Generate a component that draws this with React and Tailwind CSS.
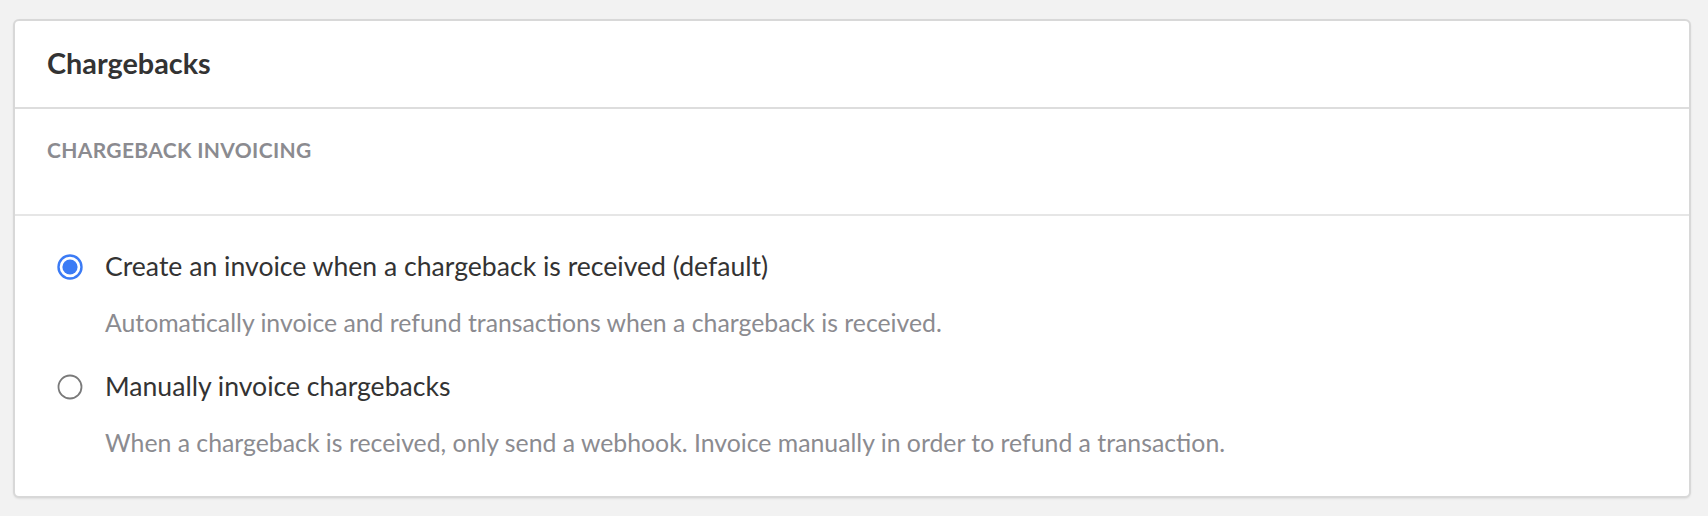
import { useState } from "react";

// Chargebacks settings card - a single radio group inside a bordered panel.
const options = [
  {
    id: "auto",
    label: "Create an invoice when a chargeback is received (default)",
    help: "Automatically invoice and refund transactions when a chargeback is received.",
  },
  {
    id: "manual",
    label: "Manually invoice chargebacks",
    help: "When a chargeback is received, only send a webhook. Invoice manually in order to refund a transaction.",
  },
];

function Radio({ checked }) {
  return (
    <svg width="26" height="26" viewBox="0 0 26 26" className="shrink-0">
      {checked ? (
        <>
          <circle cx="13" cy="13" r="11.5" fill="white" stroke="#3b7bf5" strokeWidth="2.4" />
          <circle cx="13" cy="13" r="7.6" fill="#3b7bf5" />
        </>
      ) : (
        <circle cx="13" cy="13" r="11.5" fill="white" stroke="#7a7a7a" strokeWidth="1.8" />
      )}
    </svg>
  );
}

export default function App() {
  const [value, setValue] = useState("auto");

  return (
    <div
      className="min-h-[516px] bg-[#f2f2f2] pt-[19px] pb-[20px] pl-[13px] pr-[17px]"
      style={{ fontFamily: "Lato, 'Noto Sans', sans-serif" }}
    >
      <div className="overflow-hidden rounded-[6px] border-2 border-[#d8d8d8] bg-white shadow-[0_1px_2px_rgba(0,0,0,0.08)]">
        {/* Card title */}
        <div className="flex h-[88px] items-center border-b-2 border-[#dddddd] px-[32px]">
          <h2 className="text-[28.8px] font-bold text-[#333333]">Chargebacks</h2>
        </div>

        {/* Section heading */}
        <div className="h-[107px] border-b-2 border-[#e6e6e6] px-[32px] pt-[25px]">
          <p className="text-[21px] font-bold uppercase tracking-[0.35px] text-[#8b8b90]">
            Chargeback Invoicing
          </p>
        </div>

        {/* Radio options */}
        <div className="flex flex-col gap-[22px] px-[42px] pt-[30px] pb-[32px]">
          {options.map((o) => (
            <label
              key={o.id}
              className="flex cursor-pointer flex-col"
              onClick={() => setValue(o.id)}
            >
              <div className="flex h-[42px] items-center gap-[22px]">
                <Radio checked={value === o.id} />
                <span className="text-[26.6px] text-[#333333]">{o.label}</span>
              </div>
              <p className="mt-[14px] pl-[48px] text-[24.8px] leading-[42px] text-[#8b8b90]">
                {o.help}
              </p>
            </label>
          ))}
        </div>
      </div>
    </div>
  );
}
